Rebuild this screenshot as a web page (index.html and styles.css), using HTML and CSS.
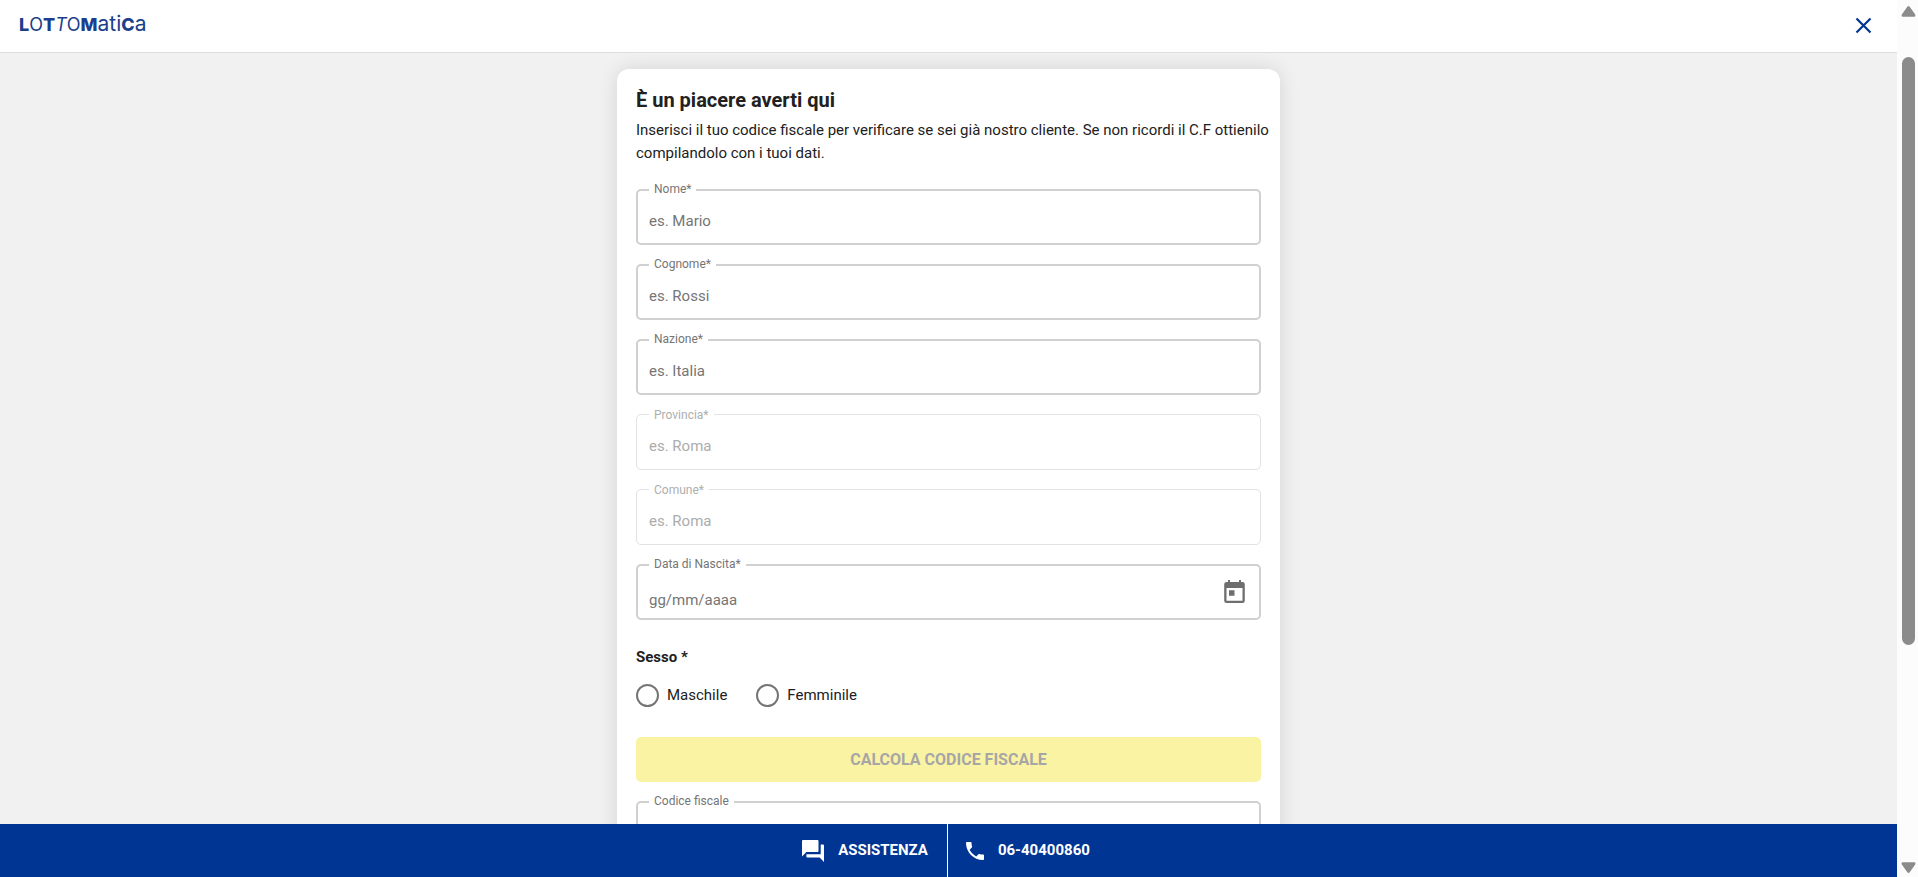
FILE: index.html
```html
<!DOCTYPE html>
<html lang="it">
<head>
<meta charset="utf-8">
<meta name="viewport" content="width=device-width, initial-scale=1">
<title>Lottomatica - Registrazione</title>
<link rel="stylesheet" href="styles.css">
</head>
<body>
<div class="app">
  <header class="header">
    <a class="logo" href="#" aria-label="Lottomatica"><span class="heavy">L</span><span class="thin">O</span><span class="heavy">T</span><span class="thin slanted">T</span><span class="thin">O</span><span class="heavy">M</span><span class="thin lower">ati</span><span class="heavy">C</span><span class="thin lower">a</span></a>
    <button class="close" type="button" aria-label="Chiudi">
      <svg width="17" height="17" viewBox="0 0 17 17"><path d="M1.500 1.500l14 14M15.500 1.500l-14 14" fill="none" stroke="currentColor" stroke-width="2.2"/></svg>
    </button>
  </header>
  <main class="main">
    <form class="card">
      <h1 class="title">È un piacere averti qui</h1>
      <p class="intro">Inserisci il tuo codice fiscale per verificare se sei già nostro cliente. Se non ricordi il C.F ottienilo compilandolo con i tuoi dati.</p>
      <div class="fields">
        <div class="field"><label class="label" for="nome">Nome*</label><input class="input" id="nome" type="text" placeholder="es. Mario"></div>
        <div class="field"><label class="label" for="cognome">Cognome*</label><input class="input" id="cognome" type="text" placeholder="es. Rossi"></div>
        <div class="field"><label class="label" for="nazione">Nazione*</label><input class="input" id="nazione" type="text" placeholder="es. Italia"></div>
        <div class="field field-disabled"><label class="label" for="provincia">Provincia*</label><input class="input" id="provincia" type="text" placeholder="es. Roma" disabled></div>
        <div class="field field-disabled"><label class="label" for="comune">Comune*</label><input class="input" id="comune" type="text" placeholder="es. Roma" disabled></div>
        <div class="field field-date"><label class="label" for="data">Data di Nascita*</label><input class="input" id="data" type="text" placeholder="gg/mm/aaaa">
          <button class="calendar" type="button" aria-label="Apri calendario">
            <svg width="21" height="23" viewBox="0 0 21 23"><path fill="currentColor" fill-rule="evenodd" d="M4 0h2v2h9V0h2v2h1.500a2.300 2.300 0 0 1 2.300 2.300v16.400a2.300 2.300 0 0 1-2.300 2.300h-16A2.300 2.300 0 0 1 .2 20.700V4.300A2.300 2.300 0 0 1 2.500 2H4zM2.500 8v12.800h16V8zM5 10.200h5.500v5.500H5z"/></svg>
          </button>
        </div>
      </div>
      <fieldset class="gender">
        <legend class="gender-title">Sesso *</legend>
        <div class="options">
          <label class="option"><input class="radio" type="radio" name="sesso">Maschile</label>
          <label class="option"><input class="radio" type="radio" name="sesso">Femminile</label>
        </div>
      </fieldset>
      <button class="submit" type="submit" disabled>CALCOLA CODICE FISCALE</button>
      <div class="field"><label class="label" for="cf">Codice fiscale</label><input class="input" id="cf" type="text"></div>
    </form>
  </main>
  <footer class="footer">
    <a class="contact contact-chat" href="#">
      <svg width="22" height="22" viewBox="2 2 20 20"><path fill="currentColor" d="M21 6h-2v9H6v2c0 .55.45 1 1 1h11l4 4V7c0-.55-.45-1-1-1zm-4 6V3c0-.55-.45-1-1-1H3c-.55 0-1 .45-1 1v14l4-4h10c.55 0 1-.45 1-1z"/></svg>
      <span>ASSISTENZA</span>
    </a>
    <a class="contact contact-phone" href="tel:0640400860">
      <svg width="18" height="18" viewBox="3 3 18 18"><path fill="currentColor" d="M6.620 10.790c1.440 2.830 3.760 5.140 6.590 6.590l2.200-2.200c.27-.27.67-.36 1.020-.24 1.120.37 2.330.57 3.570.57.55 0 1 .45 1 1V20c0 .55-.45 1-1 1-9.390 0-17-7.610-17-17 0-.55.45-1 1-1h3.500c.55 0 1 .45 1 1 0 1.250.2 2.450.57 3.570.11.35.03.74-.25 1.020l-2.200 2.200z"/></svg>
      <span>06-40400860</span>
    </a>
  </footer>
</div>
<div class="scrollbar" aria-hidden="true">
  <svg width="15" height="11" viewBox="0 0 15 11"><path fill="currentColor" d="M6.300.8q1.200-1.400 2.400 0l5.500 7.600q.9 2.400-1.200 2.400H2Q-.1 10.800.8 8.400z"/></svg>
  <div class="track"><div class="thumb"></div></div>
  <svg width="15" height="11" viewBox="0 0 15 11"><path fill="currentColor" d="M6.300 10.200q1.200 1.400 2.400 0l5.500-7.600q.9-2.400-1.200-2.400H2Q-.1.200.8 2.600z"/></svg>
</div>
</body>
</html>
```
FILE: styles.css
```css
* { box-sizing: border-box; }

body {
  margin: 0;
  height: 100vh;
  display: flex;
  overflow: hidden;
  background: #f1f1f1;
  color: #212121;
  font: 15px/23px Roboto, "Noto Sans", sans-serif;
}

button, input { font: inherit; }
a { color: inherit; text-decoration: none; }
svg { display: block; flex: none; }

.app {
  flex: 1;
  min-width: 0;
  display: flex;
  flex-direction: column;
}

.header {
  flex: none;
  height: 53px;
  padding: 0 23px 2px 19px;
  display: flex;
  align-items: center;
  justify-content: space-between;
  background: #fff;
  border-bottom: 1px solid #dedede;
}

.logo {
  display: flex;
  align-items: baseline;
  padding-bottom: 2px;
  color: #1b3f8b;
  font: 18px/24px Inter, sans-serif;
}
.heavy { font-weight: 800; }
.thin { font-weight: 400; }
.slanted { font-style: italic; }
.lower { font-size: 21px; }

.close {
  padding: 0;
  width: 21px;
  height: 24px;
  display: grid;
  place-items: center;
  border: 0;
  background: none;
  color: #003594;
}

.main {
  flex: 1;
  min-height: 0;
  overflow: hidden;
  padding: 16px 16px 0;
}

.card {
  max-width: 663px;
  margin: 0 auto;
  padding: 19px 19px 40px;
  background: #fff;
  border-radius: 12px;
  box-shadow: 0 0 20px rgba(0, 0, 0, 0.12);
}

.title { margin: 0 0 7px; font-size: 20px; line-height: 24px; font-weight: 700; }
.intro { margin: 0 -12px 24px 0; }

.fields { display: grid; gap: 19px; }

.field {
  position: relative;
  height: 56px;
  border: 2px solid #d0d0d0;
  border-radius: 5px;
  display: flex;
}

.label {
  position: absolute;
  top: -10px;
  left: 11px;
  padding: 0 5px;
  background: #fff;
  color: #757575;
  font-size: 12px;
  line-height: 16px;
}

.input {
  flex: 1;
  min-width: 0;
  padding: 8px 11px 0;
  border: 0;
  outline: 0;
  background: none;
  color: #212121;
}
.input::placeholder { color: #757575; opacity: 1; }

.field-disabled { border: 1px solid #e2e2e2; padding: 1px; }
.field-disabled .label { top: -8px; left: 12px; color: #aeaeae; }
.field-disabled .input::placeholder { color: #acacac; }

.field-date .input { padding-top: 16px; }

.calendar {
  padding: 0 14px 2px;
  border: 0;
  background: none;
  color: #6e6e6e;
}

.gender { margin: 26px 0 30px; padding: 0; border: 0; }
.gender-title { padding: 0; font-weight: 700; }
.options { display: flex; gap: 29px; margin-top: 15px; }
.option { display: flex; align-items: center; gap: 8px; }

.radio {
  appearance: none;
  width: 23px;
  height: 23px;
  margin: 0;
  border: 2px solid #757575;
  border-radius: 50%;
  background: #fff;
}

.submit {
  display: block;
  width: 100%;
  height: 45px;
  margin-bottom: 19px;
  border: 0;
  border-radius: 5px;
  background: #fbf3a4;
  color: #a6a6a6;
  font-size: 16px;
  font-weight: 700;
}

.footer {
  flex: none;
  height: 53px;
  padding-right: 5px;
  display: flex;
  justify-content: center;
  background: #003594;
  color: #fff;
  font-weight: 700;
}
.contact { display: flex; align-items: center; gap: 14px; }
.contact-chat { padding-right: 19px; border-right: 1px solid #fff; }
.contact-phone { padding-left: 18px; }

.scrollbar {
  flex: none;
  width: 21px;
  padding: 6px 0 4px 2px;
  display: flex;
  flex-direction: column;
  align-items: center;
  background: #fcfcfc;
  color: #8b8b8b;
}
.track { flex: 1; padding-top: 40px; }
.thumb { width: 13px; height: 73%; border-radius: 7px; background: currentColor; }
```
